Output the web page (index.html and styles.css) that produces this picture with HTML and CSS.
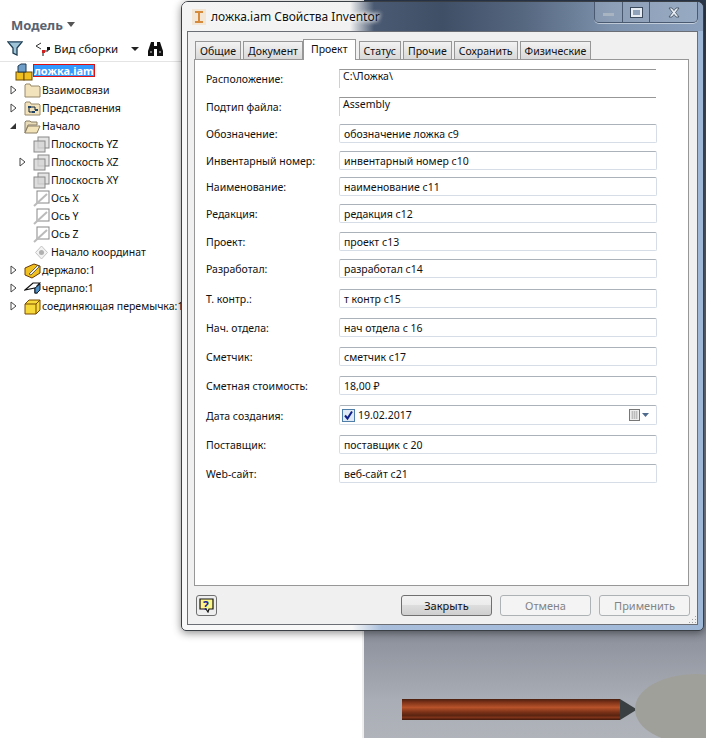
FILE: index.html
```html
<!DOCTYPE html>
<html lang="ru">
<head>
  <meta charset="UTF-8">
  <title>ложка.iam Свойства Inventor</title>
  <link rel="stylesheet" href="styles.css">
</head>
<body>

  <div class="desktop">

    <!-- Браузер модели -->
    <aside class="browser">
      <div class="browser-title">Модель <span class="title-caret"></span></div>
      <div class="browser-tools">
        <svg class="tool-filter" width="16" height="15" viewBox="0 0 16 15"><path d="M1 1h14L10 7v7L6 12V7z" fill="#9fc4d8" stroke="#1f3f55" stroke-width="1.3"/><path d="M2 1.500h12" stroke="#5a7f98"/></svg>
        <svg class="tool-view" width="18" height="14" viewBox="0 0 18 14"><path d="M1 4l5-3M1 4l5 3" stroke="#333" fill="none"/><rect x="7" y="8" width="3" height="3" fill="#d02020"/><rect x="12" y="5" width="3" height="3" fill="#111"/><path d="M10 9h3V8M8 11v3" stroke="#111" fill="none"/></svg>
        <span class="tool-label">Вид сборки</span>
        <span class="tool-caret"></span>
        <svg class="tool-find" width="17" height="14" viewBox="0 0 17 14"><path d="M4 0h3v4h3V0h3l3 9v5h-6V7H7v7H1V9z" fill="#111"/><path d="M3 10h2M12 10h2" stroke="#ddd"/></svg>
      </div>

      <ul class="tree">
        <li class="node node-root">
          <svg class="ico" width="18" height="18" viewBox="0 0 18 18"><rect x="1" y="9" width="8" height="8" fill="#f0c020" stroke="#6a4a00"/><rect x="9" y="9" width="8" height="8" fill="#f0c020" stroke="#6a4a00"/><path d="M3 9V3l3-2h5v8z" fill="#6f9fc8" stroke="#1f3a55"/></svg>
          <span class="name-selected">ложка.iam</span></li>
        <li class="node"><svg class="twist" width="7" height="10" viewBox="0 0 7 10"><use href="#closed"/></svg>
          <svg class="ico" width="17" height="17" viewBox="0 0 17 17"><use href="#folder"/></svg>
          <span>Взаимосвязи</span></li>
        <li class="node"><svg class="twist" width="7" height="10" viewBox="0 0 7 10"><use href="#closed"/></svg>
          <svg class="ico" width="17" height="17" viewBox="0 0 17 17"><use href="#folder"/><path d="M5 7h6M5 7v5h3M11 7v3" stroke="#123" fill="none"/><rect x="4" y="6" width="3" height="2" fill="#246"/><rect x="8" y="11" width="3" height="2" fill="#246"/><rect x="11" y="9" width="3" height="2" fill="#246"/></svg>
          <span>Представления</span></li>
        <li class="node"><span class="twist-open"></span>
          <svg class="ico" width="17" height="17" viewBox="0 0 17 17"><path d="M1 15V4l1-1h4l1 1h6v3H4z" fill="#e9dcb8" stroke="#8a7f66"/><path d="M1 15l3-7h12l-3 7z" fill="#f2e3b8" stroke="#8a7f66"/></svg>
          <span>Начало</span></li>
        <li class="node sub"><svg class="ico" width="17" height="17" viewBox="0 0 17 17"><use href="#plane"/></svg><span>Плоскость YZ</span></li>
        <li class="node sub"><svg class="twist sub-twist" width="7" height="10" viewBox="0 0 7 10"><use href="#closed"/></svg><svg class="ico" width="17" height="17" viewBox="0 0 17 17"><use href="#plane"/></svg><span>Плоскость XZ</span></li>
        <li class="node sub"><svg class="ico" width="17" height="17" viewBox="0 0 17 17"><use href="#plane"/></svg><span>Плоскость XY</span></li>
        <li class="node sub"><svg class="ico" width="17" height="17" viewBox="0 0 17 17"><use href="#axis"/></svg><span>Ось X</span></li>
        <li class="node sub"><svg class="ico" width="17" height="17" viewBox="0 0 17 17"><use href="#axis"/></svg><span>Ось Y</span></li>
        <li class="node sub"><svg class="ico" width="17" height="17" viewBox="0 0 17 17"><use href="#axis"/></svg><span>Ось Z</span></li>
        <li class="node sub"><svg class="ico" width="17" height="17" viewBox="0 0 17 17"><path d="M8.500 2l6 6.500-6 6.500-6-6.500z" fill="#f2f2f2" stroke="#c4c4c4"/><circle cx="8.500" cy="8.500" r="2.500" fill="#b0b0b0"/></svg><span>Начало координат</span></li>
        <li class="node"><svg class="twist" width="7" height="10" viewBox="0 0 7 10"><use href="#closed"/></svg>
          <svg class="ico" width="17" height="17" viewBox="0 0 17 17"><path d="M1 6l9-4 6 2v7l-8 5-7-3z" fill="#f0c020" stroke="#6a3a00"/><path d="M5 12l9-9 1 2-8 8z" fill="#eee" stroke="#333" stroke-width=".7"/></svg>
          <span>держало:1</span></li>
        <li class="node"><svg class="twist" width="7" height="10" viewBox="0 0 7 10"><use href="#closed"/></svg>
          <svg class="ico" width="17" height="17" viewBox="0 0 17 17"><path d="M1 10l8-7h7l-3 3v7h-2V8z" fill="#fff" stroke="#111" stroke-width="1.2"/><path d="M11 8l5-4v6l-3 3h-2z" fill="#4f8fc4" stroke="#123"/></svg>
          <span>черпало:1</span></li>
        <li class="node"><svg class="twist" width="7" height="10" viewBox="0 0 7 10"><use href="#closed"/></svg>
          <svg class="ico" width="17" height="17" viewBox="0 0 17 17"><path d="M1 6l4-4h11v10l-4 4H1z" fill="#f6d83a" stroke="#7a4a00"/><path d="M1 6h11v10M12 6l4-4" fill="none" stroke="#7a4a00"/></svg>
          <span>соединяющая перемычка:1</span></li>
      </ul>
    </aside>

    <!-- 3D вид -->
    <main class="viewport">
      <div class="pencil">
        <div class="pencil-body"></div>
        <svg class="pencil-tip" width="17" height="21" viewBox="0 0 17 21"><path d="M0 0l17 10.500L0 21z" fill="#3a3f42"/></svg>
      </div>
      <div class="blob"></div>
    </main>

    <!-- Окно свойств -->
    <section class="window">
      <header class="titlebar">
        <svg class="app-icon" width="14" height="16" viewBox="0 0 14 16"><rect width="14" height="16" fill="#f4e6d4"/><path d="M3 2h8v2H8v8h3v2H3v-2h3V4H3z" fill="#d58a3c"/></svg>
        <span class="window-title">ложка.iam Свойства Inventor</span>
        <div class="caption-btns">
          <span class="cap-btn cap-min"><i></i></span>
          <span class="cap-btn cap-max"><i></i></span>
          <span class="cap-btn cap-close">
            <svg width="14" height="11" viewBox="0 0 14 11"><path d="M2 1h3l2 2.500L9 1h3L8.500 5.500 12 10H9L7 7.500 5 10H2l3.500-4.500z" fill="#e8eef4" stroke="#3a4a5c" stroke-width=".8"/></svg>
          </span>
        </div>
      </header>

      <div class="client">
        <div class="tabs">
          <span class="tab">Общие</span>
          <span class="tab">Документ</span>
          <span class="tab tab-active">Проект</span>
          <span class="tab">Статус</span>
          <span class="tab">Прочие</span>
          <span class="tab">Сохранить</span>
          <span class="tab">Физические</span>
        </div>

        <div class="panel">
          <div class="form">
            <label>Расположение:</label><div class="ro">C:\Ложка\</div>
            <label>Подтип файла:</label><div class="ro">Assembly</div>
            <label>Обозначение:</label><div class="field">обозначение ложка с9</div>
            <label>Инвентарный номер:</label><div class="field">инвентарный номер с10</div>
            <label>Наименование:</label><div class="field">наименование с11</div>
            <label>Редакция:</label><div class="field">редакция с12</div>
            <label>Проект:</label><div class="field">проект с13</div>
            <label>Разработал:</label><div class="field">разработал с14</div>
            <label>Т. контр.:</label><div class="field">т контр с15</div>
            <label>Нач. отдела:</label><div class="field">нач отдела с 16</div>
            <label>Сметчик:</label><div class="field">сметчик с17</div>
            <label>Сметная стоимость:</label><div class="field">18,00 ₽</div>
            <label class="label-date">Дата создания:</label>
            <div class="field field-date">
              <svg class="check" width="13" height="13" viewBox="0 0 13 13"><rect x=".5" y=".5" width="12" height="12" fill="#dfeaf6" stroke="#4f7fa8"/><path d="M3 6.500l2.500 3L10 2.500" fill="none" stroke="#10208a" stroke-width="2"/></svg>
              <span>19.02.2017</span>
              <svg class="cal" width="21" height="12" viewBox="0 0 21 12"><rect x=".5" y=".5" width="10" height="11" fill="#eee" stroke="#777"/><path d="M2 3h7M2 5h7M2 7h7M2 9h7M3.500 2v8M5.500 2v8M7.500 2v8" stroke="#aaa" stroke-width=".6"/><path d="M13 4h7l-3.500 4z" fill="#4f6a8c"/></svg>
            </div>
            <label>Поставщик:</label><div class="field">поставщик с 20</div>
            <label>Web-сайт:</label><div class="field">веб-сайт с21</div>
          </div>
        </div>

        <footer class="actions">
          <span class="help-btn">
            <svg width="15" height="15" viewBox="0 0 15 15"><path d="M1 1h13v10h-4l-1 3-2-3H1z" fill="#fff68a" stroke="#111" stroke-width="1.2"/></svg>
            <b>?</b>
          </span>
          <span class="spacer"></span>
          <button class="btn btn-default">Закрыть</button>
          <button class="btn" disabled>Отмена</button>
          <button class="btn" disabled>Применить</button>
          <svg class="grip" width="9" height="9" viewBox="0 0 9 9"><path d="M7 1h1v1H7zM4 4h1v1H4zM7 4h1v1H7zM1 7h1v1H1zM4 7h1v1H4zM7 7h1v1H7z" fill="#a0a0a0"/></svg>
        </footer>
      </div>
    </section>
  </div>

  <svg width="0" height="0" class="defs">
    <defs>
      <g id="closed"><path d="M1 1l5 4-5 4z" fill="#fff" stroke="#444"/></g>
      <g id="folder"><path d="M1 15V3l1-1h4l1 2h8l1 1v10z" fill="#f3e3bc" stroke="#98896a"/></g>
      <g id="plane"><rect x="5" y="1" width="11" height="11" fill="#e4e4e4" stroke="#888"/><rect x="1" y="5" width="11" height="11" fill="#d4d4d4" stroke="#888" fill-opacity=".8"/></g>
      <g id="axis"><rect x="4" y="1" width="12" height="12" fill="#fff" stroke="#888"/><path d="M1 16L14 4" stroke="#bbb" stroke-width="2"/></g>
    </defs>
  </svg>

</body>
</html>
```

FILE: styles.css
```css
* {
  box-sizing: border-box;
  margin: 0;
  padding: 0;
}
html, body { height: 100%; }
body {
  background: #fff;
  overflow: hidden;
  font-family: 'Noto Sans', Arial, sans-serif;
  font-size: 10.5px;
  color: #111;
}
.defs { position: absolute; }

.desktop { position: relative; display: flex; width: 706px; height: 738px; overflow: hidden; }

/* браузер модели */
.browser { width: 364px; flex: none; background: #fff; border-right: 2px solid #eee; padding-top: 16px; }
.browser-title { display: flex; align-items: center; gap: 4px; padding-left: 11px; height: 17px; font-size: 13px; font-weight: bold; color: #5a6270; }
.title-caret { border: 4px solid transparent; border-top: 5px solid #555; border-bottom: 0; }
.browser-tools { display: flex; align-items: center; height: 20px; margin-top: 6px; padding-left: 7px; padding-bottom: 1px; }
.tool-view { margin-left: 12px; }
.tool-label { margin-left: 1px; font-size: 11.500px; }
.tool-caret { margin-left: 13px; border: 4px solid transparent; border-top: 4px solid #222; border-bottom: 0; }
.tool-find { margin-left: 8px; }

.tree { list-style: none; margin-top: 2px; border-top: 1px solid #e4e4e4; }
.node { position: relative; display: flex; align-items: center; gap: 1px; height: 18px; padding-left: 24px; white-space: nowrap; }
.node.sub { padding-left: 33px; }
.node-root { height: 19px; padding-left: 15px; gap: 0; }
.ico { flex: none; }
.twist { position: absolute; left: 10px; top: 4px; }
.twist.sub-twist { left: 19px; }
.twist-open { position: absolute; left: 10px; top: 6px; width: 0; height: 0; border-style: solid; border-width: 0 0 6px 6px; border-color: transparent transparent #333 transparent; }
.name-selected { display: flex; align-items: center; height: 13px; margin-bottom: 2px; padding: 0 1px; font-size: 11px; background: #3399ff; color: #fff; font-weight: bold; outline: 1px solid #e01010; outline-offset: -1px; }

/* 3D вид */
.viewport { position: relative; flex: 1; background: linear-gradient(180deg, #2c3a4e 0, #3a4658 60px, #8a8f9a 630px, #a9adb5 700px, #b0b3ba 738px); }
.pencil { position: absolute; left: 38px; top: 699px; display: flex; }
.pencil-body { width: 218px; height: 21px; background: linear-gradient(180deg, #4a1f10 0, #7c3218 15%, #b8532a 40%, #7c3218 62%, #5a2410 78%, #7c3218 88%, #3e180c 100%); }
.blob { position: absolute; left: 271px; top: 674px; width: 120px; height: 70px; border-radius: 50%; background: #a0a09a; }

/* окно свойств */
.window { position: absolute; left: 181px; top: 1px; width: 523px; height: 630px; display: flex; flex-direction: column; padding: 0 5px 5px; border: 1px solid #3a3f45; border-radius: 7px 7px 5px 5px; background: linear-gradient(90deg, #f8f8f8 0, #f8f8f8 170px, #a8bedb 200px, #a0b8d8 100%); box-shadow: 0 2px 8px rgba(0,0,0,.45); }
.titlebar { display: flex; align-items: center; height: 29px; flex: none; margin: 0 -5px; padding: 0 5px 0 10px; border-radius: 6px 6px 0 0; background: linear-gradient(90deg, #f4f4f4 0, #f2f2f2 168px, #4a5a72 192px, #3f4f66 260px, #55667f 340px, #7d92ad 430px, #8aa0bc 521px); }
.app-icon { flex: none; }
.window-title { margin-left: 5px; font-size: 12px; color: #111; text-shadow: 0 0 5px #fff, 0 0 5px #fff, 0 0 5px #fff; }
.caption-btns { display: flex; margin-left: auto; align-self: flex-start; height: 21px; border: 1px solid #4a5a70; border-top: 0; border-radius: 0 0 5px 5px; box-shadow: 0 1px 0 rgba(255,255,255,.5); }
.cap-btn { display: flex; align-items: center; justify-content: center; height: 100%; border-right: 1px solid #4a5a70; background: rgba(255,255,255,.12); }
.cap-btn:last-child { border-right: 0; }
.cap-min { width: 28px; }
.cap-min i { width: 11px; height: 3px; margin-top: 4px; background: #a9b4c2; }
.cap-max { width: 27px; }
.cap-max i { width: 11px; height: 9px; border: 2px solid #e6ecf2; outline: 1px solid #3a4a5c; }
.cap-close { width: 47px; }

.client { position: relative; flex: 1; display: flex; flex-direction: column; background: #f0f0f0; border: 1px solid #6b6f75; padding: 9px 7px 0 6px; }
.tabs { display: flex; flex: none; height: 18px; padding-left: 1px; position: relative; z-index: 1; gap: 2px; }
.tab { display: flex; align-items: center; padding: 0 4px; height: 18px; align-self: flex-end; background: linear-gradient(180deg, #f2f2f2, #d9d9d9); border: 1px solid #979797; border-bottom: 0; }
.tab-active { height: 21px; margin: 0 1px -1px -2px; padding: 0 7px 3px; background: #fff; position: relative; z-index: 2; }

.panel { flex: none; width: 495px; height: 527px; background: #fff; border: 1px solid #979797; }
.form { display: grid; grid-template-columns: 133px 318px; grid-template-rows: 28px 27px 27px 26px 27px 28px 27px 30px 29px 29px 29px 29px 30px 29px 20px; padding: 9px 0 0 11px; align-items: start; }
.form label { display: flex; align-items: center; height: 19px; }
.form .label-date { height: 21px; }
.ro { height: 19px; width: 317px; padding: 0 3px; line-height: 13px; border-top: 1px solid #979797; border-left: 1px solid #d0d0d0; }
.field { display: flex; align-items: center; height: 19px; padding: 0 4px; border: 1px solid #d6dde6; border-top-color: #acb2ba; border-radius: 2px; }
.field-date { height: 20px; gap: 3px; padding: 0 2px; }
.cal { margin-left: auto; margin-right: 4px; }

.actions { flex: 1; display: flex; align-items: center; gap: 8px; padding: 1px 0 0 2px; }
.help-btn { position: relative; display: flex; align-items: center; justify-content: center; width: 21px; height: 21px; border: 1px solid #707070; border-radius: 3px; background: #eee; }
.help-btn b { position: absolute; left: 6px; top: 1px; font-size: 12px; color: #1a2a9a; }
.spacer { flex: 1; }
.btn { width: 91px; height: 21px; font-family: inherit; font-size: 11px; color: #111; border: 1px solid #707070; border-radius: 3px; background: linear-gradient(180deg, #f2f2f2 0, #ebebeb 50%, #dddddd 50%, #cfcfcf 100%); }
.btn:disabled { color: #838383; border-color: #adb2b5; background: #f4f4f4; }
.grip { position: absolute; right: 0; bottom: 0; }
```
